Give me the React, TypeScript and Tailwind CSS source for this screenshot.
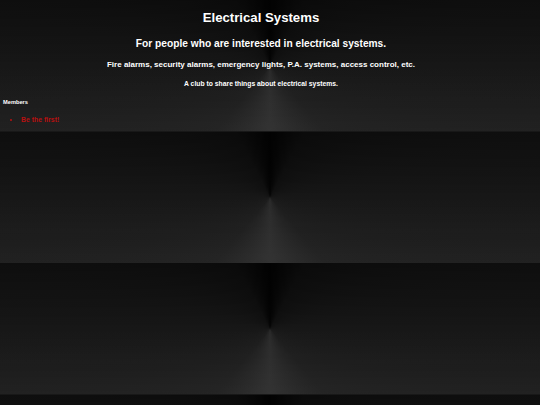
const TILE_BG =
  "bg-[linear-gradient(to_bottom,rgba(0,0,0,0.35),rgba(0,0,0,0)_50%,rgba(255,255,255,0.04)),conic-gradient(from_0deg_at_50%_50%,#030303_0deg,#101010_28deg,#161616_80deg,#1c1c1c_140deg,#2b2b2b_180deg,#1c1c1c_220deg,#161616_280deg,#101010_332deg,#030303_360deg)]";

export default function App() {
  return (
    <div
      className={`min-h-[405px] w-full ${TILE_BG} bg-[length:100%_131.5px] bg-repeat text-white font-['Comic_Sans_MS','Liberation_Sans',sans-serif] font-bold`}
    >
      <div className="flex flex-col items-center pt-[9px] pr-[18px]">
        <h1 className="text-[13.2px] leading-[18px]">Electrical Systems</h1>
        <h2 className="mt-[10px] text-[10.2px] leading-[14px]">
          For people who are interested in electrical systems.
        </h2>
        <h3 className="mt-[9px] text-[8px] leading-[10px]">
          Fire alarms, security alarms, emergency lights, P.A. systems, access control, etc.
        </h3>
        <p className="mt-[10px] text-[6.8px] leading-[8px]">
          A club to share things about electrical systems.
        </p>
      </div>

      <div className="px-[3px] pt-[10px]">
        <h4 className="text-[5.7px] leading-[8px]">Members</h4>
        <ul className="mt-[10px] list-disc pl-[18px] text-[#b81010] text-[6.9px] leading-[8px] marker:text-[#b81010]">
          <li>Be the first!</li>
        </ul>
      </div>
    </div>
  );
}
